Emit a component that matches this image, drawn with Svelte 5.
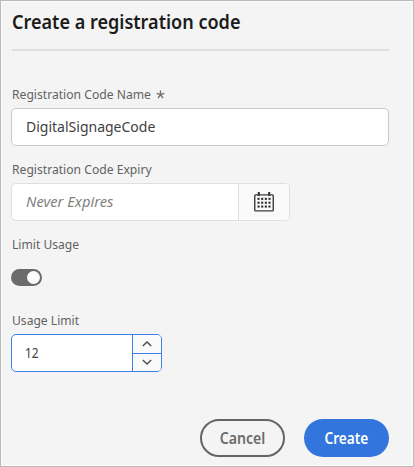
<script>
  let name = $state('DigitalSignageCode');
  let limit = $state(12);
  let limited = $state(true);
  const dots = [0, 1, 2].flatMap((r) => [0, 1, 2, 3].map((c) => ({ x: 4 + c * 3.65, y: 5.8 + r * 3.85 })));
</script>

<main class="dialog">
  <header><h1><span class="t title">Create a registration code</span></h1></header>
  <section class="field name">
    <div class="label">
      <span class="t l1">Registration Code Name</span>
      <svg width="9" height="9" viewBox="0 0 9 9"><path d="M4.5 .4V4.6M4.5 4.6L.6 3.4M4.5 4.6L8.4 3.4M4.5 4.6L2 8.2M4.5 4.6L7 8.2" stroke="#6e6e6e" stroke-width="1.35" fill="none" /></svg>
    </div>
    <div class="box text"><span class="t value">{name}</span></div>
  </section>
  <section class="field expiry">
    <div class="label"><span class="t l2">Registration Code Expiry</span></div>
    <div class="box date">
      <div class="entry"><span class="t placeholder">Never Expires</span></div>
      <button class="cal" aria-label="Calendar">
        <svg width="20" height="20" viewBox="0 0 20 20">
          <rect x=".75" y="2.9" width="18.5" height="16" rx=".8" fill="none" stroke="#3c3c3c" stroke-width="1.4" />
          <path d="M4.8 0v4M15.2 0v4" stroke="#333" stroke-width="2" />
          {#each dots as d}<rect x={d.x - 0.5} y={d.y} width="2.1" height="2.1" fill="#303030" />{/each}
        </svg>
      </button>
    </div>
  </section>
  <section class="field usage">
    <div class="label"><span class="t l3">Limit Usage</span></div>
    <button class="toggle" class:on={limited} aria-label="Limit Usage" onclick={() => (limited = !limited)}><i></i></button>
  </section>
  <section class="field limit">
    <div class="label"><span class="t l4">Usage Limit</span></div>
    <div class="box number">
      <div class="entry"><span class="t digits">{limit}</span></div>
      <div class="steps">
        <button aria-label="Increase" onclick={() => limit++}><svg width="10" height="6" viewBox="0 0 10 6"><path d="M.8 5L5 1L9.2 5" /></svg></button>
        <button aria-label="Decrease" onclick={() => limit--}><svg width="10" height="6" viewBox="0 0 10 6"><path d="M.8 1L5 5L9.2 1" /></svg></button>
      </div>
    </div>
  </section>
  <footer>
    <button class="action cancel"><span class="t c1">Cancel</span></button>
    <button class="action create"><span class="t c2">Create</span></button>
  </footer>
</main>

<style>
  :global(body) { margin: 0; background: #f4f4f4; }
  * { box-sizing: border-box; }
  button { font: inherit; padding: 0; margin: 0; border: 0; background: none; color: inherit; }
  svg { display: block; }
  .dialog {
    width: 414px; height: 467px; padding: 0 24px 0 10px;
    border: 1px solid #b9b9b9; box-shadow: inset 0 0 0 1px #fbfbfb;
    background: #f4f4f4; font-family: "Noto Sans", "Open Sans", sans-serif;
    display: flex; flex-direction: column; overflow: hidden;
  }
  .t { display: inline-block; white-space: nowrap; transform-origin: 0 50%; }
  header { height: 50px; border-bottom: 2px solid #dedede; border-radius: 1px; padding-top: 8px; margin-left: 1px; flex: none; }
  h1 { margin: 0; font-size: 19px; line-height: 27px; font-weight: 600; color: #1b1b1b; }
  .title { transform: scaleX(.95); }
  .field { display: flex; flex-direction: column; flex: none; }
  .name { margin-top: 33px; height: 75px; }
  .expiry { height: 75px; }
  .usage { height: 76px; }
  .limit { height: 76px; }
  .label { height: 24px; display: flex; font-size: 13.3px; line-height: 20px; color: #626262; padding-left: 1px; flex: none; }
  .label svg { margin: 6px 0 0 -8px; }
  .l1, .l2 { transform: scaleX(.912); }
  .l3, .l4 { transform: scaleX(.91); }
  .box { height: 38px; border: 1px solid #c9c9c9; border-radius: 5px; background: #fff; display: flex; overflow: hidden; flex: none; }
  .text { width: 378px; padding-left: 14px; font-size: 15.2px; line-height: 35px; color: #404040; }
  .value { transform: scaleX(.922); }
  .date { width: 279px; border-color: #dfdfdf; }
  .entry { flex: 1; min-width: 0; padding-left: 14px; line-height: 35px; font-size: 15.2px; }
  .placeholder { font-style: italic; color: #818181; transform: scaleX(.967); }
  .cal { width: 51px; border-left: 1px solid #dfdfdf; background: #fafafa; display: flex; align-items: center; justify-content: center; }
  .toggle { width: 31px; height: 17px; border-radius: 9px; background: #bbb; padding: 2px; margin-top: 11px; display: flex; flex: none; }
  .toggle.on { background: #6b6b6b; justify-content: flex-end; }
  .toggle i { width: 13px; height: 13px; background: #fcfcfc; border-radius: 50%; }
  .number { width: 151px; border-color: #3c7fe8; color: #404040; }
  .digits { transform: scaleX(.78); }
  .number .entry { padding-left: 13px; }
  .steps { width: 29px; border-left: 1px solid #3c7fe8; display: flex; flex-direction: column; background: #fafafa; }
  .steps button { flex: 1; display: flex; align-items: center; justify-content: center; }
  .steps button + button { border-top: 1px solid #3c7fe8; }
  .steps path { fill: none; stroke: #505050; stroke-width: 1.5; }
  footer { display: flex; justify-content: flex-end; gap: 19px; margin-top: 33px; }
  .action { width: 85px; height: 38px; border-radius: 19px; font-size: 15.2px; font-weight: 600; line-height: 34px; }
  .action .t { transform-origin: 50% 50%; }
  .cancel { border: 2px solid #646464; color: #6b6b6b; }
  .create { background: #3275dd; color: #fff; }
  .c1 { transform: scaleX(.93); }
  .c2 { transform: scaleX(.9); }
</style>
